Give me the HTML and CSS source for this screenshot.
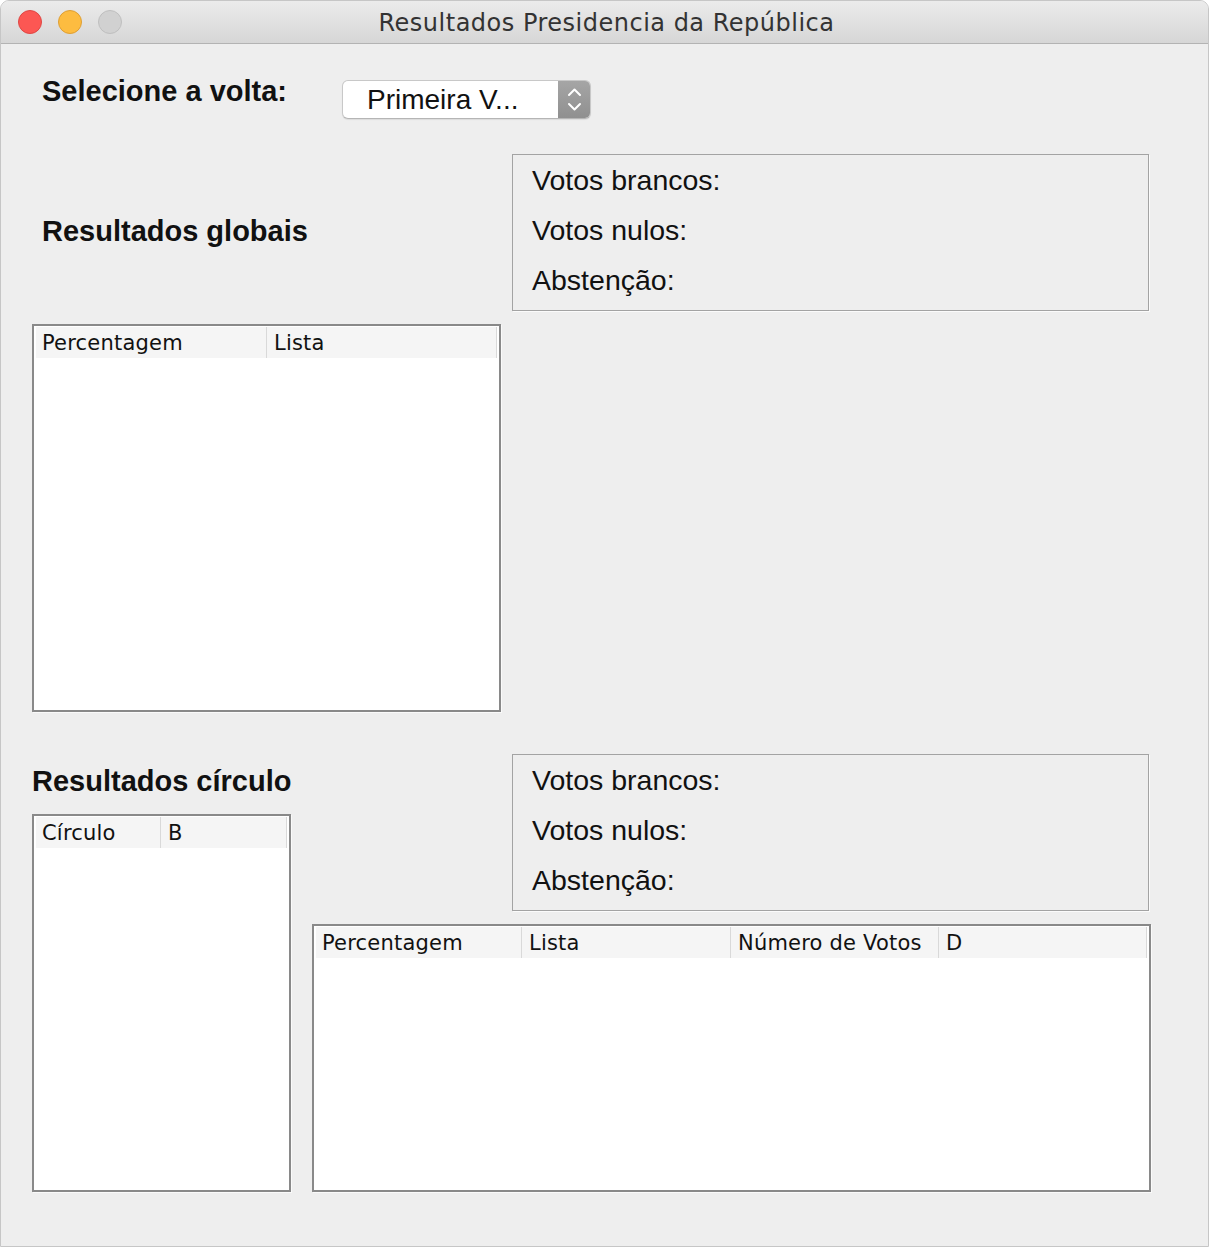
FILE: index.html
```html
<!DOCTYPE html>
<html lang="pt">
<head>
<meta charset="utf-8">
<title>Resultados Presidencia da República</title>
<link rel="stylesheet" href="styles.css">
</head>
<body>
<div class="window">
  <div class="titlebar">
    <div class="lights">
      <span class="light red"></span>
      <span class="light yellow"></span>
      <span class="light grey"></span>
    </div>
    <div class="title">Resultados Presidencia da República</div>
  </div>
  <div class="content">
    <div class="row-select">
      <div class="label select-label">Selecione a volta:</div>
      <div class="combo">
        <div class="combo-text">Primeira V...</div>
        <div class="combo-btn">
          <svg width="33" height="39" viewBox="0 0 33 39">
            <path d="M11 15 L16.5 9.5 L22 15" fill="none" stroke="#fff" stroke-width="2" stroke-linecap="round" stroke-linejoin="round"/>
            <path d="M11 24 L16.5 29.5 L22 24" fill="none" stroke="#fff" stroke-width="2" stroke-linecap="round" stroke-linejoin="round"/>
          </svg>
        </div>
      </div>
    </div>

    <div class="row-global">
      <div class="label global-label">Resultados globais</div>
      <div class="panel">
        <div class="panel-line">Votos brancos:</div>
        <div class="panel-line">Votos nulos:</div>
        <div class="panel-line">Abstenção:</div>
      </div>
    </div>

    <div class="table table-global">
      <div class="thead">
        <div class="th" style="width:231px">Percentagem</div>
        <div class="th" style="width:230px">Lista</div>
      </div>
    </div>

    <div class="row-circle">
      <div class="label circle-label">Resultados círculo</div>
      <div class="panel panel-circle">
        <div class="panel-line">Votos brancos:</div>
        <div class="panel-line">Votos nulos:</div>
        <div class="panel-line">Abstenção:</div>
      </div>
      <div class="table table-circle">
        <div class="thead">
          <div class="th" style="width:125px">Círculo</div>
          <div class="th" style="width:126px">B</div>
        </div>
      </div>
      <div class="table table-results">
        <div class="thead">
          <div class="th" style="width:206px">Percentagem</div>
          <div class="th" style="width:209px">Lista</div>
          <div class="th" style="width:208px">Número de Votos</div>
          <div class="th" style="width:208px">D</div>
        </div>
      </div>
    </div>
  </div>
</div>
</body>
</html>
```

FILE: styles.css
```css
* { box-sizing: border-box; }
html, body { margin: 0; padding: 0; background: #ffffff; }

.window {
  width: 1209px;
  height: 1247px;
  background: #eeeeee;
  border: 1px solid #c6c6c6;
  border-radius: 9px 9px 0 0;
  overflow: hidden;
}

.titlebar {
  position: relative;
  height: 43px;
  background: linear-gradient(#ebebeb, #d6d6d6);
  border-bottom: 1px solid #b3b3b3;
  display: flex;
  align-items: center;
  justify-content: center;
}

.lights {
  position: absolute;
  left: 17px;
  top: 9px;
  display: flex;
  gap: 16px;
}
.light {
  width: 24px;
  height: 24px;
  border-radius: 50%;
  display: block;
}
.light.red { background: #fc5753; border: 1px solid #df4744; }
.light.yellow { background: #fdbc40; border: 1px solid #de9f34; }
.light.grey { background: #d1d1d1; border: 1px solid #bfbfbf; }

.title {
  font-family: "DejaVu Sans", sans-serif;
  font-size: 24px;
  color: #333333;
  letter-spacing: 0.5px;
  margin-left: 4px;
  margin-top: 2px;
}

.content {
  padding-left: 31px;
}

.label {
  font-family: "Liberation Sans", Arial, sans-serif;
  font-weight: bold;
  font-size: 29px;
  color: #111111;
  line-height: 32px;
}

.row-select {
  display: flex;
  align-items: flex-start;
  margin-top: 36px;
  height: 39px;
}
.select-label {
  width: 310px;
  padding-left: 10px;
  line-height: 22px;
}

.combo {
  width: 249px;
  height: 39px;
  display: flex;
  border-radius: 6px;
  background: #ffffff;
  border: 1px solid #c8c8c8;
  border-bottom-color: #b5b5b5;
  box-shadow: 0 1px 1px rgba(0,0,0,0.08);
  overflow: hidden;
}
.combo-text {
  flex: 1;
  font-family: "Liberation Sans", Arial, sans-serif;
  font-size: 28px;
  color: #111111;
  padding-left: 24px;
  line-height: 38px;
}
.combo-btn {
  width: 33px;
  margin: -1px -1px -1px 0;
  background: linear-gradient(#a6a6a6, #8f8f8f);
  display: flex;
  align-items: center;
  justify-content: center;
}

.row-global {
  display: grid;
  grid-template-columns: 480px 637px;
  margin-top: 35px;
}
.global-label {
  padding-left: 10px;
  margin-top: 61px;
}

.panel {
  height: 157px;
  border: 1px solid #a3a3a3;
  box-shadow: 1px 1px 0 #fbfbfb;
  padding-left: 19px;
}
.panel-line {
  font-family: "Liberation Sans", Arial, sans-serif;
  font-size: 28.5px;
  color: #111111;
  line-height: 50px;
}

.table {
  background: #ffffff;
  border: 2px solid #898989;
  box-shadow: 1px 1px 0 #fafafa;
  padding: 1px 2px 0 2px;
}
.thead {
  display: flex;
  height: 31px;
  background: #f5f5f5;
}
.th {
  font-family: "DejaVu Sans", sans-serif;
  font-size: 21px;
  letter-spacing: 0.2px;
  color: #111111;
  line-height: 31px;
  padding-top: 1px;
  padding-left: 6px;
  border-right: 1px solid #d9d9d9;
  white-space: nowrap;
}
.th + .th { padding-left: 7px; }

.table-global {
  width: 469px;
  height: 388px;
  margin-top: 13px;
}

.row-circle {
  display: grid;
  grid-template-columns: 259px 21px 200px 637px 2px;
  grid-template-rows: 60px 97px 13px 268px;
  margin-top: 42px;
}
.circle-label {
  grid-column: 1 / 4;
  grid-row: 1;
  margin-top: 11px;
}
.panel-circle {
  grid-column: 4;
  grid-row: 1 / 3;
}
.table-circle {
  grid-column: 1;
  grid-row: 2 / 5;
}
.table-results {
  grid-column: 3 / 6;
  grid-row: 4;
}
```
